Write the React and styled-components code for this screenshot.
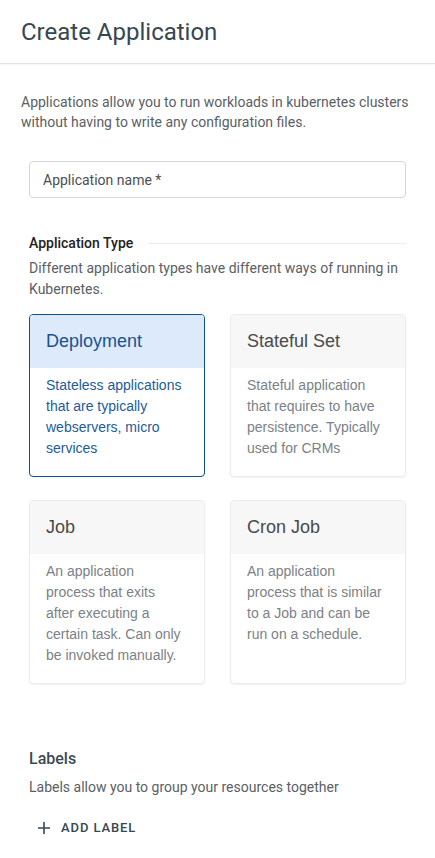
import React, { useState } from "react";
import styled, { createGlobalStyle } from "styled-components";

const GlobalStyle = createGlobalStyle`
  body {
    margin: 0;
    background: #fff;
    font-family: Roboto, "Liberation Sans", sans-serif;
  }
`;

const appTypes = [
    {
        id: "deployment",
        title: "Deployment",
        text: "Stateless applications that are typically webservers, micro services",
    },
    {
        id: "statefulset",
        title: "Stateful Set",
        text: "Stateful application that requires to have persistence. Typically used for CRMs",
    },
    {
        id: "job",
        title: "Job",
        text: "An application process that exits after executing a certain task. Can only be invoked manually.",
    },
    {
        id: "cronjob",
        title: "Cron Job",
        text: "An application process that is similar to a Job and can be run on a schedule.",
    },
];

const CreateApplication = () => {
    // 선택된 타입
    const [selected, setSelected] = useState("deployment");
    return (
        <>
            <GlobalStyle />
            <Header>
                <Title>Create Application</Title>
            </Header>
            <Intro>
                Applications allow you to run workloads in kubernetes clusters
                without having to write any configuration files.
            </Intro>
            <Form>
                <NameInput placeholder="Application name *" />
                <SectionHead>
                    <SectionTitle>Application Type</SectionTitle>
                    <Rule />
                </SectionHead>
                <Hint>
                    Different application types have different ways of running
                    in Kubernetes.
                </Hint>
                <CardGrid>
                    {appTypes.map((item) => (
                        <TypeCard
                            key={item.id}
                            $active={selected === item.id}
                            onClick={() => setSelected(item.id)}
                        >
                            <CardHead $active={selected === item.id}>
                                {item.title}
                            </CardHead>
                            <CardBody $active={selected === item.id}>
                                {item.text}
                            </CardBody>
                        </TypeCard>
                    ))}
                </CardGrid>
                <Labels>
                    <LabelsTitle>Labels</LabelsTitle>
                    <LabelsHint>
                        Labels allow you to group your resources together
                    </LabelsHint>
                    <AddButton>
                        <svg width="14" height="14" viewBox="0 0 14 14">
                            <path
                                d="M7 1v12M1 7h12"
                                stroke="#37474f"
                                strokeWidth="1.6"
                            />
                        </svg>
                        ADD LABEL
                    </AddButton>
                </Labels>
            </Form>
        </>
    );
};

const Header = styled.div`
    height: 63px;
    display: flex;
    align-items: center;
    padding: 0 21px;
    border-bottom: 1px solid #e3e3e3;
    box-shadow: 0 1px 2px rgba(0, 0, 0, 0.04);
`;

const Title = styled.h1`
    margin: 0;
    font-size: 24px;
    font-weight: 400;
    color: #37474f;
`;

const Intro = styled.p`
    margin: 28px 0 0;
    padding: 0 21px;
    font-size: 14px;
    line-height: 20px;
    color: #5a6066;
`;

const Form = styled.div`
    padding: 29px 29px 0;
`;

const NameInput = styled.input`
    box-sizing: border-box;
    width: 100%;
    height: 37px;
    padding: 0 13px;
    border: 1px solid #d6d6d6;
    border-radius: 4px;
    font-family: Roboto, sans-serif;
    font-size: 14px;
    outline: none;
    &::placeholder {
        color: #4a4f54;
    }
`;

const SectionHead = styled.div`
    display: flex;
    align-items: center;
    gap: 16px;
    margin-top: 35px;
`;

const SectionTitle = styled.div`
    font-size: 14px;
    font-weight: 500;
    line-height: 20px;
    color: #222;
`;

const Rule = styled.div`
    flex: 1;
    height: 1px;
    background: #ececec;
`;

const Hint = styled.p`
    margin: 5px 0 0;
    font-size: 14px;
    line-height: 21px;
    color: #5a6066;
`;

const CardGrid = styled.div`
    display: grid;
    grid-template-columns: 1fr 1fr;
    column-gap: 25px;
    row-gap: 23px;
    margin-top: 14px;
`;

const TypeCard = styled.div`
    border: 1px solid ${(p) => (p.$active ? "#0d4f91" : "#ececec")};
    border-radius: 4px;
    overflow: hidden;
    cursor: pointer;
    box-shadow: ${(p) =>
        p.$active ? "none" : "0 1px 2px rgba(0, 0, 0, 0.06)"};
    font-family: "Liberation Sans", Arial, sans-serif;
`;

const CardHead = styled.div`
    height: 53px;
    display: flex;
    align-items: center;
    padding: 0 16px;
    font-size: 18px;
    background: ${(p) => (p.$active ? "#dceafc" : "#f7f7f7")};
    color: ${(p) => (p.$active ? "#1a528f" : "#4a4a4a")};
`;

const CardBody = styled.div`
    padding: 7px 18px 17px 16px;
    font-size: 14px;
    line-height: 21px;
    color: ${(p) => (p.$active ? "#1d5b9b" : "#7c8187")};
`;

const Labels = styled.div`
    margin-top: 65px;
`;

const LabelsTitle = styled.div`
    font-size: 16px;
    font-weight: 500;
    line-height: 20px;
    color: #3c4a53;
`;

const LabelsHint = styled.p`
    margin: 8px 0 0;
    font-size: 14px;
    line-height: 20px;
    color: #5a6066;
`;

const AddButton = styled.button`
    display: flex;
    align-items: center;
    gap: 10px;
    margin-top: 21px;
    padding: 0 0 0 8px;
    border: none;
    background: none;
    font-family: Roboto, sans-serif;
    font-size: 13px;
    font-weight: 500;
    letter-spacing: 0.9px;
    line-height: 20px;
    color: #37474f;
    cursor: pointer;
`;

export default CreateApplication;
